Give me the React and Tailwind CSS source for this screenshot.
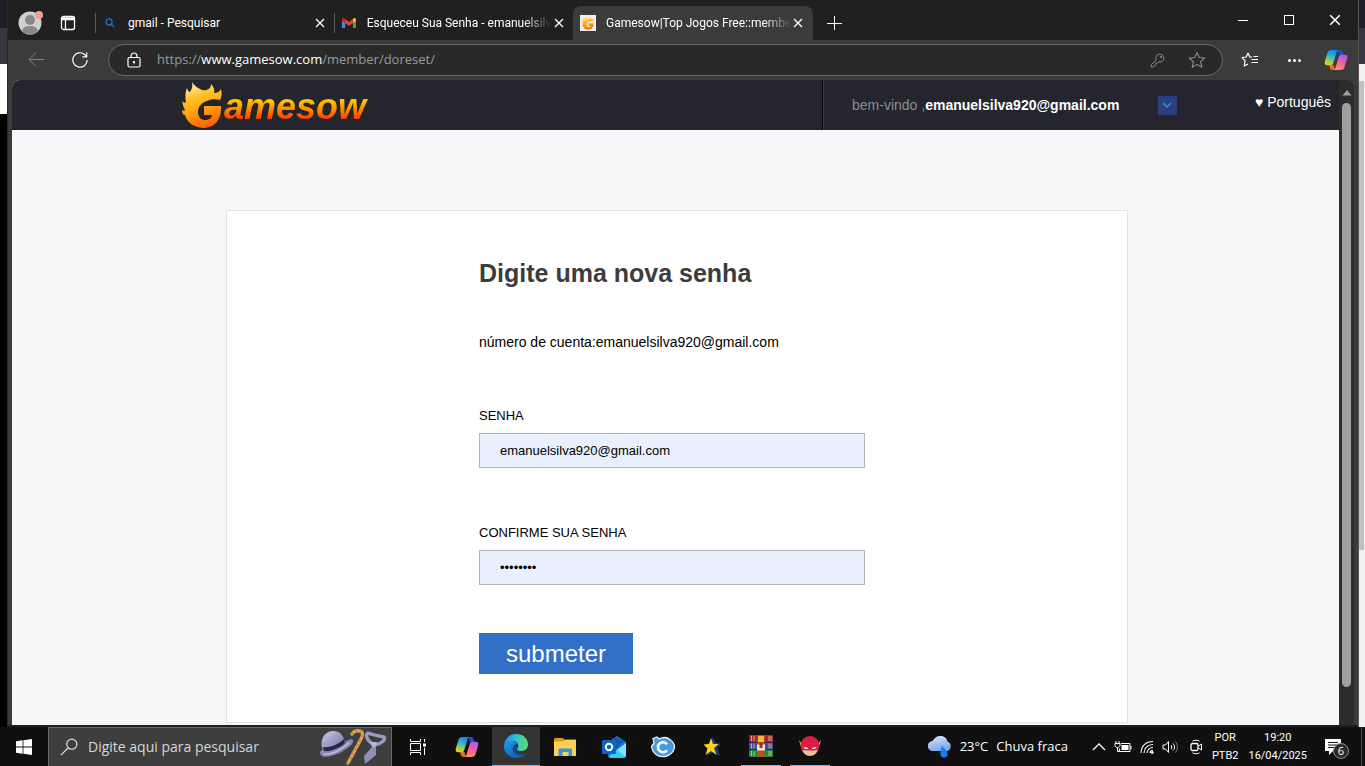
/**
 * Desktop with an Edge window open on the Gamesow password reset page
 * - window chrome (tabs + toolbar)
 * - reset form
 * - Windows taskbar
 */
import { useState } from 'react'

const UI_FONT = "font-['Open_Sans','Noto_Sans',sans-serif]"

function CopilotIcon({ id, className }) {
  return (
    <svg viewBox="0 0 24 24" className={className} aria-hidden="true">
      <defs>
        <linearGradient id={`${id}a`} x1="0.6" y1="0" x2="0.3" y2="1">
          <stop offset="0" stopColor="#1b7df0" />
          <stop offset="0.4" stopColor="#28b5d8" />
          <stop offset="0.75" stopColor="#9bd04a" />
          <stop offset="1" stopColor="#f6c61c" />
        </linearGradient>
        <linearGradient id={`${id}b`} x1="0.7" y1="0" x2="0.3" y2="1">
          <stop offset="0" stopColor="#a259f5" />
          <stop offset="0.5" stopColor="#f0609c" />
          <stop offset="1" stopColor="#fb9a55" />
        </linearGradient>
      </defs>
      <path d="M13 2h3c1.5 0 2.3 1 2.7 2.3L19.5 7H15z" fill="#1554c8" />
      <path d="M11 22H8.500c-1.500 0-2.300-1-2.700-2.300L5 17h4.500z" fill="#f2662c" />
      <path d="M7.500 2h7c-1.200.4-1.700 1.300-2.100 2.700L9.300 15c-.5 1.500-1.300 2.300-2.800 2.300H3.200C1 17.300.2 15.600.8 13.500l2.800-9C4.200 2.700 5.500 2 7.500 2z" fill={`url(#${id}a)`} />
      <path d="M16.500 22h-7c1.200-.4 1.700-1.300 2.100-2.700L14.700 9c.5-1.500 1.300-2.300 2.800-2.300h3.300c2.200 0 3 1.700 2.400 3.800l-2.800 9c-.6 1.800-1.900 2.500-3.900 2.500z" fill={`url(#${id}b)`} />
    </svg>
  )
}

function FlameG({ id, className }) {
  return (
    <svg viewBox="0 0 42 48" className={className} aria-hidden="true">
      <defs>
        <linearGradient id={id} x1="0.3" y1="0" x2="0.6" y2="1">
          <stop offset="0" stopColor="#fff3b0" />
          <stop offset="0.3" stopColor="#ffc42a" />
          <stop offset="0.65" stopColor="#ff9a0c" />
          <stop offset="1" stopColor="#ff5a05" />
        </linearGradient>
      </defs>
      <path
        d="M10 1c2 3 5 6 10 8 5 1 9-1 9-6 3 3 4 6 3 9 3 0 5-1 7-4 1 4 1 8-1 11-4-1-9-1-13 1-6 2-9 6-9 11 0 5 3 8 7 8 4 0 7-2 7-5h-8v-9h17c1 13-6 22-18 22C12 46 5 42 3 34c-2 0-3-2-3-5 1 1 2 1 3 0-2-3-2-6-3-9 2 2 3 2 4 1-1-5-1-9 1-14 1 3 2 4 3 4 2-3 3-6 2-10z"
        fill={`url(#${id})`}
      />
    </svg>
  )
}

function CloseX({ className }) {
  return (
    <svg viewBox="0 0 10 10" className={className} fill="none" stroke="currentColor" aria-hidden="true">
      <path d="M1 1l8 8M9 1l-8 8" strokeWidth="1.300" />
    </svg>
  )
}

function SearchIcon({ className, flip, width = 2 }) {
  return (
    <svg viewBox="0 0 16 16" className={className} fill="none" stroke="currentColor" strokeWidth={width} aria-hidden="true">
      {flip ? (
        <path d="M10.500 1a4.500 4.500 0 1 1 0 9 4.500 4.500 0 0 1 0-9zM7.300 8.700L.8 15.200" />
      ) : (
        <path d="M6.500 1.500a4.800 4.800 0 1 1 0 9.600 4.800 4.800 0 0 1 0-9.600zM10 10l5 5" />
      )}
    </svg>
  )
}

function GmailIcon() {
  return (
    <svg viewBox="0 0 16 12" className="w-3.5" aria-hidden="true">
      <path d="M0 1.800V11c0 .6.400 1 1 1h2.600V5z" fill="#4285f4" />
      <path d="M16 1.800V11c0 .6-.4 1-1 1h-2.600V5z" fill="#34a853" />
      <path d="M12.400 1.200V5.800L16 3.200V1.800C16 .2 14.300-.5 13.100.500z" fill="#fbbc04" />
      <path d="M3.600 5.800V1.200L8 4.500l4.400-3.300v4.600L8 9.100z" fill="#ea4335" />
      <path d="M0 1.800v1.400l3.600 2.600V1.200L2.900.600C1.700-.4 0 .2 0 1.800z" fill="#c5221f" />
    </svg>
  )
}

const TABS = [
  { title: 'gmail - Pesquisar', icon: <SearchIcon className="size-2.5 text-[#1a73d0]" /> },
  { title: 'Esqueceu Sua Senha - emanuelsilv', fade: true, icon: <GmailIcon /> },
  {
    title: 'Gamesow|Top Jogos Free::membe',
    active: true,
    fade: true,
    icon: (
      <span className="flex size-4 items-center justify-center bg-[#eeeef2]">
        <FlameG id="tabflame" className="h-3.5" />
      </span>
    ),
  },
]

function Tab({ title, icon, active, fade }) {
  return (
    <div
      className={
        active
          ? 'flex w-60 items-center self-stretch rounded-t-lg bg-[#3b3b3b] pr-2 pl-[7px]'
          : 'flex h-5 w-[239px] items-center border-l border-[#5a5a5a] pr-1.5 pl-1.5'
      }
    >
      <span className="flex w-4 justify-center">{icon}</span>
      <span
        className={`ml-2.5 whitespace-nowrap ${fade ? '[mask-image:linear-gradient(to_right,black_85%,transparent)]' : ''}`}
      >
        {title}
      </span>
      <button aria-label="Fechar guia" className="ml-auto flex size-4 items-center justify-center">
        <CloseX className="size-2.5" />
      </button>
    </div>
  )
}

function TabStrip() {
  return (
    <div className="flex h-10 items-center bg-[#202020] pt-1.5 font-['Roboto',sans-serif] text-xs text-white">
      <div className="flex w-[87px] items-center gap-4 pl-2.5">
        <button aria-label="Perfil">
          <svg viewBox="0 0 26 26" className="size-[26px]">
            <circle cx="12" cy="13" r="11.500" fill="#d2d0ce" />
            <circle cx="12" cy="10" r="5" fill="#8a8886" />
            <path d="M4 21c1-4 4-5 8-5s7 1 8 5a11.500 11.500 0 0 1-16 0z" fill="#8a8886" />
            <circle cx="21" cy="5" r="4" fill="#f59e98" />
          </svg>
        </button>
        <button aria-label="Menu de guias">
          <svg viewBox="0 0 16 16" className="size-4" fill="none" stroke="currentColor" strokeWidth="1.300">
            <rect x="1.500" y="1.500" width="13" height="13" rx="2" />
            <path d="M2 3h12M2 4.500h12M5.500 5v9" />
          </svg>
        </button>
      </div>
      {TABS.map((t) => (
        <Tab key={t.title} {...t} />
      ))}
      <button aria-label="Nova guia" className="ml-3.5">
        <svg viewBox="0 0 16 16" className="size-4" stroke="currentColor">
          <path d="M7.500 1v14M0 8.500h15" />
        </svg>
      </button>
      <div className="ml-auto flex h-10 pb-1.5">
        <button aria-label="Minimizar" className="flex w-[46px] items-center justify-center">
          <span className="h-px w-2.5 bg-white" />
        </button>
        <button aria-label="Maximizar" className="flex w-[46px] items-center justify-center">
          <span className="size-2.5 border border-white" />
        </button>
        <button aria-label="Fechar" className="flex w-[46px] items-center justify-center">
          <CloseX className="size-3" />
        </button>
      </div>
    </div>
  )
}

const STAR = 'M8 1.300l2 4.500 4.900.5-3.700 3.200 1.100 4.900L8 11.900l-4.300 2.500 1.100-4.900L1.100 6.300 6 5.800z'

function Toolbar() {
  return (
    <div className="flex h-10 items-center bg-[#3b3b3b] pl-5 text-white">
      <button aria-label="Voltar" className="text-[#858585]">
        <svg viewBox="0 0 16 16" className="size-4" fill="none" stroke="currentColor">
          <path d="M16 7.500H1M8 .5l-7 7 7 7" />
        </svg>
      </button>
      <button aria-label="Atualizar" className="ml-7">
        <svg viewBox="0 0 16 16" className="size-4" fill="none" stroke="currentColor" strokeWidth="1.200">
          <path d="M15.200 8a7.200 7.200 0 1 1-2.300-5.300L14.500 4.500M14.700.5v4.300h-4.300" />
        </svg>
      </button>
      <div className="ml-5 flex h-8 flex-1 items-center rounded-full border border-[#686868] bg-[#292929] pr-4 pl-[18px]">
        <svg viewBox="0 0 14 16" className="h-4" fill="none" stroke="currentColor" strokeWidth="1.200" aria-hidden="true">
          <rect x="1" y="5.500" width="12" height="9.500" rx="1.500" />
          <path d="M4 5.500V4a3 3 0 0 1 6 0v1.500" />
          <circle cx="7" cy="10.200" r="0.600" fill="currentColor" />
        </svg>
        <p className="ml-4 flex-1 text-[13px] text-[#9a9a9a]">
          https://<span className="text-white">www.gamesow.com</span>/member/doreset/
        </p>
        <button aria-label="Senhas" className="text-[#8b8b8b]">
          <svg viewBox="0 0 16 16" className="size-4" fill="none" stroke="currentColor">
            <path d="M6.300 8A4 4 0 1 1 9 10l-1 .2-1.200 1.200H5.500V13L3.500 15H1.200v-2.300z" />
            <circle cx="11" cy="5" r="0.700" />
          </svg>
        </button>
        <button aria-label="Favoritar" className="ml-[22px] text-[#8b8b8b]">
          <svg viewBox="0 0 16 16" className="size-[18px]" fill="none" stroke="currentColor" strokeLinejoin="round">
            <path d={STAR} />
          </svg>
        </button>
      </div>
      <button aria-label="Favoritos" className="ml-[18px]">
        <svg viewBox="0 0 18 16" className="h-4" fill="none" stroke="currentColor" strokeWidth="1.200" strokeLinejoin="round">
          <path d="M11 5.200L8.800 5 7 1 5.200 5 1 5.600l3 3-.8 5.400L7 12M10.500 7.500H17M10.500 10.500H17M12.500 4.500H17" />
        </svg>
      </button>
      <button aria-label="Mais" className="ml-[27px] flex w-4 justify-center gap-0.5">
        <span className="size-[3px] rounded-full bg-white" />
        <span className="size-[3px] rounded-full bg-white" />
        <span className="size-[3px] rounded-full bg-white" />
      </button>
      <button aria-label="Copilot" className="mr-2.5 ml-[22px]">
        <CopilotIcon id="bar" className="size-6" />
      </button>
    </div>
  )
}

function SiteHeader() {
  return (
    <header className="flex h-[50px] shrink-0 bg-[#24252d] text-sm">
      <div className="flex flex-1 items-center border-r border-black pl-[170px]">
        <a href="#inicio" className="flex items-center">
          <FlameG id="logoflame" className="h-12" />
          <span className="bg-linear-to-b from-[#ffc400] from-40% to-[#ff3c00] to-80% bg-clip-text pt-1 pr-1 text-4xl font-bold text-transparent italic">
            amesow
          </span>
        </a>
      </div>
      <div className="flex w-[516px] items-center border-l border-[#3a3b43] pr-2 pl-7">
        <p className="text-[#8c8c8c]">
          bem-vindo ,<b className="text-white">emanuelsilva920@gmail.com</b>
        </p>
        <button aria-label="Abrir menu" className="ml-auto flex size-[19px] items-center justify-center bg-[#2e3f7f] text-[#19a5dc]">
          <svg viewBox="0 0 10 6" className="w-2.5" fill="none" stroke="currentColor" strokeWidth="1.300">
            <path d="M1 1l4 4 4-4" />
          </svg>
        </button>
        <a href="#idioma" className="ml-[78px] pb-1.5 text-white">
          <span>♥</span> Português
        </a>
      </div>
    </header>
  )
}

function ResetForm() {
  const [senha, setSenha] = useState('emanuelsilva920@gmail.com')
  const [confirma, setConfirma] = useState('12345678')

  const field = 'mt-[7px] h-[35px] w-[386px] border border-[#b3b5ba] bg-[#e8f0fe] px-5 text-[13px] outline-none'

  return (
    <form
      onSubmit={(e) => e.preventDefault()}
      className="mx-auto flex w-[902px] flex-col items-start border border-[#dfe1e3] bg-white pt-[46px] pb-12 pl-[252px] text-black"
    >
      <h1 className="text-[25px] leading-8 font-bold text-[#3c3c3c]">Digite uma nova senha</h1>
      <p className="mt-[43px] text-sm">número de cuenta:emanuelsilva920@gmail.com</p>
      <label htmlFor="senha" className="mt-[54px] text-[13px] leading-5">
        SENHA
      </label>
      <input id="senha" type="text" value={senha} onChange={(e) => setSenha(e.target.value)} className={field} />
      <label htmlFor="confirma" className="mt-[55px] text-[13px] leading-5">
        CONFIRME SUA SENHA
      </label>
      <input id="confirma" type="password" value={confirma} onChange={(e) => setConfirma(e.target.value)} className={field} />
      <button type="submit" className="mt-12 h-[41px] w-[154px] bg-[#3170c6] text-2xl text-white">
        submeter
      </button>
    </form>
  )
}

// Vertical scrollbar of the page
function Scrollbar() {
  return (
    <div className="flex w-[15px] flex-col items-center rounded-tr-lg bg-[#2c2c2c] pt-2.5 pb-[38px]">
      <svg viewBox="0 0 10 6" className="w-2.5 text-[#9f9f9f]" fill="currentColor" aria-hidden="true">
        <path d="M5 0l4.500 5.500h-9z" />
      </svg>
      <div className="mt-[7px] w-[9px] flex-1 rounded-full bg-[#9f9f9f]" />
    </div>
  )
}

const APPS = [
  {
    name: 'Visão de tarefas',
    icon: (
      <svg viewBox="0 0 18 18" className="size-[18px]" fill="none" stroke="#fff">
        <path d="M1.500 1v2.500h10V1M1.500 17v-2.500h10V17M1.500 5.500h10v7h-10zM15.500 1v3M15.500 9.500V17" />
        <path d="M14 5.500h3v3h-3z" fill="#fff" stroke="none" />
      </svg>
    ),
  },
  { name: 'Copilot', icon: <CopilotIcon id="task" className="size-6" /> },
  {
    name: 'Microsoft Edge',
    active: true,
    icon: (
      <svg viewBox="0 0 24 24" className="size-6">
        <defs>
          <linearGradient id="edgeTop" x1="0" y1="0.500" x2="1" y2="0.500">
            <stop offset="0" stopColor="#1b8de0" />
            <stop offset="0.500" stopColor="#2fc2d8" />
            <stop offset="1" stopColor="#62dd62" />
          </linearGradient>
          <linearGradient id="edgeLow" x1="0" y1="0" x2="0.600" y2="1">
            <stop offset="0" stopColor="#1e9be8" />
            <stop offset="1" stopColor="#1260b4" />
          </linearGradient>
        </defs>
        <path d="M0 11.500C.5 5 5.500 0 12 0c7.500 0 12 5 12 10.500 0 4-3 6.500-6.500 6.500-3 0-4.800-1-4.300-2.200 2-2.300 1.300-7.300-4.200-7.800C5 6.700 1 8.500 0 11.500z" fill="url(#edgeTop)" />
        <path d="M0 12c.8-3.500 4-5 7.500-5 3 0 5 1.500 5.700 3.300C10 10 8.500 13 9 15.500c.8 4 5 6 9 5.500 1.500-.2 2.500-.6 3.600-1.200C19.500 22.500 16 24 12 24 5 24-.3 18.500 0 12z" fill="url(#edgeLow)" />
        <path d="M9.200 12.500c-1.700 4 1 9.500 8 9 1.800-.1 3.600-1 4.600-2.200-3.300 1.500-8.500.8-9.400-3.300-.3-1.500.2-2 .8-2.800-1-1.800-3.200-1.800-4-.7z" fill="#154a86" />
      </svg>
    ),
  },
  {
    name: 'Explorador de Arquivos',
    icon: (
      <svg viewBox="0 0 22 18" className="w-[22px]">
        <path d="M0 1.500C0 .7.500 0 1.300 0H9l1.500 1.800H22V5H0z" fill="#dd9a12" />
        <path d="M0 3.500h9L11 1.800h11V18H0z" fill="#fbd055" />
        <path d="M4.500 18v-6c0-1 .6-1.500 1.500-1.500h10.500c.9 0 1.500.5 1.500 1.500v6h-3.500v-4h-6v4z" fill="#3b93dc" />
      </svg>
    ),
  },
  {
    name: 'Outlook',
    icon: (
      <svg viewBox="0 0 24 22" className="w-6">
        <path d="M6 6l9-6 9 6v13c0 1.700-1 3-3 3H8c-1.500 0-2-1-2-2.500z" fill="#1a78d4" />
        <path d="M13 1.500l9 3.500-8 8-6-5z" fill="#1257a8" />
        <path d="M24 7L7 20c.3 1.300 1 2 2 2h12c2 0 3-1 3-3z" fill="#38c8f4" />
        <path d="M24 7l-9 7 8.500 7c.4-.5.500-1.300.5-2z" fill="#7ce4fb" />
        <rect y="4" width="14" height="14" rx="1.500" fill="#0f65c0" />
        <circle cx="7" cy="11" r="3.200" fill="none" stroke="#fff" strokeWidth="1.900" />
      </svg>
    ),
  },
  {
    name: 'Navegador C',
    icon: (
      <svg viewBox="0 0 24 22" className="w-6">
        <path d="M2 2.500l4-1.500 2 2c3-2 8-2.200 11 .5 2 1.500 4.500 4.500 4.500 7S22 16 19.500 18c-4 3.500-11 3.500-14.500.5C2.500 16.500 1 14 .5 10.500L3 7z" fill="#4a9bdc" stroke="#e6f2fb" strokeWidth="1.300" />
        <path d="M16 8.200a5 5 0 1 0 0 6" fill="none" stroke="#fff" strokeWidth="2.600" />
      </svg>
    ),
  },
  {
    name: 'Estrela',
    icon: (
      <svg viewBox="0 0 18 20" className="w-[18px]">
        <path d="M10 0l2.500 6 5.500.5-4 4.500 3 8-7-4-6 4 2-7L2 7l5-.5z" fill="#163a86" />
        <path d="M8 1l2 6 5.500 0-4.500 4 2.500 7-5.500-4-5.500 4 2-6.500L.5 7.500l5.500-.5z" fill="#ffd21a" />
      </svg>
    ),
  },
  {
    name: 'WinRAR',
    open: true,
    icon: (
      <svg viewBox="0 0 24 22" className="w-6">
        <rect width="24" height="7" rx="1" fill="#b3203a" />
        <rect y="7.500" width="24" height="7" rx="1" fill="#4a45a8" />
        <rect y="15" width="24" height="7" rx="1" fill="#1f8a45" />
        <path d="M2.500 1v5M5 1v5M20 1v5M22 1v5M2.500 8.500v5M5 8.500v5M20 8.500v5M22 8.500v5M2.500 16v5M5 16v5M20 16v5M22 16v5" stroke="#d8c56a" strokeWidth="0.900" />
        <rect x="8.500" width="7" height="22" fill="#b7531c" />
        <path d="M9 1h6v6H9z" fill="#f3b640" />
        <path d="M8 9.500h8v6H8z" fill="#f4ead4" />
        <path d="M10.500 7.500h3V13h-3z" fill="#8c3a12" />
      </svg>
    ),
  },
  {
    name: 'Flash',
    open: true,
    icon: (
      <svg viewBox="0 0 22 20" className="w-[22px]">
        <path d="M0 4l2.500 3L4 13l-2-2zM22 4l-2.500 3L18 13l2-2z" fill="#e8a52a" />
        <path d="M2.500 12c1 5 4.500 8 8.500 8s7.500-3 8.500-8z" fill="#f0c09a" />
        <path d="M2 9c0-5 4-9 9-9s9 4 9 9c0 2-.3 3.500-1 5l-4 .5H7L3 14c-.7-1.500-1-3-1-5z" fill="#d81e44" />
        <path d="M4.500 11l5 1C8.500 13.700 5.500 13.500 4.500 11zM17.500 11l-5 1c1 1.700 4 1.500 5-1z" fill="#fff" />
      </svg>
    ),
  },
]

function TaskbarSearch() {
  return (
    <label className="flex w-[344px] items-center border border-b-0 border-[#6a6a6a] bg-[#3e3e3e] pl-[11px]">
      <SearchIcon flip width={1.1} className="size-[18px] text-[#dcdcdc]" />
      <input
        type="text"
        placeholder="Digite aqui para pesquisar"
        aria-label="Pesquisar"
        className="ml-2.5 w-0 flex-1 bg-transparent text-sm outline-none placeholder:text-[#d6d6d6]"
      />
      <svg viewBox="0 0 68 36" className="mr-1 w-[68px]" aria-hidden="true">
        <defs>
          <linearGradient id="hat" x1="0" y1="0" x2="1" y2="1">
            <stop offset="0" stopColor="#cfcbec" />
            <stop offset="1" stopColor="#6a6a95" />
          </linearGradient>
        </defs>
        <path d="M1 24c0-3 4-4 8-6l16-5c4-2 8-4 9-2 1 3-3 7-10 11C15 27 2 31 1 24z" fill="#8a8ab4" />
        <path d="M3 19C1 9 6 3 13 2c8-1 12 5 13 12-5 5-15 9-21 8z" fill="url(#hat)" />
        <path d="M4 18c8 1 16-3 21-8l1 4c-5 5-15 9-21 8z" fill="#27274a" />
        <path d="M4 25c8 1 18-4 26-11" fill="none" stroke="#c9c8e6" strokeWidth="1.200" />
        <path d="M29 34L42 10c3-5 1-8-2-8-3-1-5 0-7 3" fill="none" stroke="#dda055" strokeWidth="3.400" strokeLinecap="round" />
        <path d="M29 34L42 10c3-5 1-8-2-8-3-1-5 0-7 3" fill="none" stroke="#b57a3c" strokeWidth="3.400" strokeDasharray="1 4" />
        <path d="M54 15C48 12 46 6 49 4c5 2 11 3 16 4 2 3-3 7-9 8z" fill="none" stroke="#9a9ac2" strokeWidth="3.400" strokeLinejoin="round" />
        <path d="M52 13h6l-1 5-4 1z" fill="#b9b8dc" />
        <path d="M53 18l4-1 0 9-11 9-1-8z" fill="#8f8fbb" />
      </svg>
    </label>
  )
}

function Tray() {
  return (
    <div className="ml-auto flex items-center text-[13px] text-white">
      <svg viewBox="0 0 24 22" className="w-6" aria-hidden="true">
        <defs>
          <linearGradient id="cloud" x1="0" y1="0" x2="0.400" y2="1">
            <stop offset="0" stopColor="#dbe9fb" />
            <stop offset="1" stopColor="#7ea8e8" />
          </linearGradient>
        </defs>
        <path d="M5 15a5 5 0 0 1-.5-10C6 2 9 0 12 0c4 0 7 2 7.500 5.500A5 5 0 0 1 19 15z" fill="url(#cloud)" />
        <path d="M13.500 9.500c3 3 6 5.500 6 8.500a3.500 3.500 0 0 1-7 0c0-3 1-5 1-8.500z" fill="#1a7cf0" />
      </svg>
      <span className="ml-2">23°C</span>
      <span className="ml-2">Chuva fraca</span>
      <div className="ml-6 flex items-center gap-2">
        <button aria-label="Ícones ocultos">
          <svg viewBox="0 0 14 8" className="w-3.5" fill="none" stroke="currentColor" strokeWidth="1.300">
            <path d="M1 7l6-6 6 6" />
          </svg>
        </button>
        <svg viewBox="0 0 18 14" className="w-[18px]" fill="none" stroke="currentColor" aria-hidden="true">
          <path d="M2 1v2M5 1v2M1 3.500h5v2c0 1-1 2-2.500 2S1 6.500 1 5.500zM3.500 7.500v4h2" />
          <path d="M7 3.500h9v8H5.500V8.500M17 6v3" />
          <path d="M7.500 5h7v5h-7z" fill="currentColor" stroke="none" />
        </svg>
        <svg viewBox="0 0 14 14" className="w-3.5" fill="none" stroke="currentColor" aria-hidden="true">
          <path d="M1 13C1 6 6 1.500 13 1.500M4 13c0-5 4-8.500 9-8.500M7 13c0-3 3-5.500 6-5.500M10 13c0-1.500 1.500-2.500 3-2.500" strokeWidth="1.100" />
          <circle cx="12.300" cy="12.500" r="1" fill="currentColor" />
        </svg>
        <svg viewBox="0 0 16 14" className="w-4" fill="none" stroke="currentColor" aria-hidden="true">
          <path d="M1 5h2.500l3-3.500v11L3.500 9H1zM9 5c1 1 1 3 0 4M11 3.500c2 2 2 5 0 7" />
          <path d="M13.200 1.500c3 3 3 8 0 11" stroke="#7a7a7a" />
        </svg>
        <svg viewBox="0 0 12 16" className="ml-1 w-3" fill="none" stroke="currentColor" aria-hidden="true">
          <rect x="1" y="4.500" width="7" height="7" rx="1.500" strokeWidth="1.300" />
          <path d="M8.500 7l3-2v6l-3-2M2.500 2.200c2-1.300 5-1.300 7 0M2.500 13.800c2 1.300 5 1.300 7 0" />
        </svg>
      </div>
      <p className="ml-2.5 text-center font-['Roboto',sans-serif] text-[11px] leading-[18px]">
        POR
        <br />
        PTB2
      </p>
      <p className="ml-2.5 text-center font-['Roboto',sans-serif] text-[11px] leading-[18px]">
        19:20
        <br />
        16/04/2025
      </p>
      <button aria-label="Notificações" className="relative mr-3 ml-[18px] size-6">
        <svg viewBox="0 0 24 24" className="size-6">
          <path d="M0 4h16v12H8l-4 4v-4H0z" fill="#fff" />
          <path d="M3 7.500h10M3 10h10M3 12.500h7" stroke="#111" />
        </svg>
        <span className="absolute top-2 left-2 flex size-4 items-center justify-center rounded-full border border-[#8a8a8a] bg-[#2a2a2a] text-[11px] leading-none">
          6
        </span>
      </button>
      <span className="mr-[3px] h-[39px] w-px bg-[#4a4a4a]" />
    </div>
  )
}

function Taskbar() {
  return (
    <footer className={`${UI_FONT} flex h-[39px] shrink-0 bg-[#101010]`}>
      <button aria-label="Iniciar" className="flex w-12 items-center justify-center">
        <svg viewBox="0 0 16 16" className="size-4" fill="#fff">
          <path d="M0 2.200l6.600-.9v6.300H0zM7.400 1.200L16 0v7.600H7.400zM0 8.400h6.600v6.300L0 13.800zM7.400 8.400H16V16l-8.600-1.200z" />
        </svg>
      </button>
      <TaskbarSearch />
      <div className="ml-0.5 flex gap-px">
        {APPS.map((a) => (
          <button
            key={a.name}
            aria-label={a.name}
            className={`flex w-12 flex-col items-center ${a.active ? 'bg-[#333333]' : ''}`}
          >
            <span className="flex flex-1 items-center">{a.icon}</span>
            {a.active && <span className="h-px w-full bg-[#76b9ed]" />}
            {a.open && <span className="h-px w-10 bg-[#76b9ed]" />}
          </button>
        ))}
      </div>
      <Tray />
    </footer>
  )
}

export default function App() {
  return (
    <div className="flex h-screen flex-col overflow-hidden bg-black font-['Liberation_Sans',Arial,sans-serif]">
      <div className="flex min-h-0 flex-1">
        {/* slivers of the windows behind */}
        <div className="w-2 shrink-0 border-r border-[#2a2a2a] bg-black">
          <div className="h-7 bg-[#1e1f27]" />
          <div className="h-9 bg-[#36373e]" />
          <div className="h-[50px] bg-white" />
        </div>

        <div className="flex min-w-0 flex-1 flex-col bg-[#3b3b3b]">
          <div className={UI_FONT}>
            <TabStrip />
            <Toolbar />
          </div>
          <div className="flex min-h-0 flex-1 border-b-2 border-[#1b1e24] pr-1 pl-1">
            <div className="flex flex-1 flex-col overflow-hidden rounded-tl-lg bg-[#f5f7f9]">
              <SiteHeader />
              <main className="pt-20 pl-[3px]">
                <ResetForm />
              </main>
            </div>
            <Scrollbar />
          </div>
        </div>

        <div className="flex w-[7px] shrink-0 flex-col border-l border-[#555] bg-[#f0f0f0]">
          <div className="h-7 bg-[#1e1f27]" />
          <div className="h-9 bg-[#36373e]" />
          <div className="mt-[17px] mr-px h-[469px] bg-[#c1c1c1]" />
        </div>
      </div>
      <Taskbar />
    </div>
  )
}
